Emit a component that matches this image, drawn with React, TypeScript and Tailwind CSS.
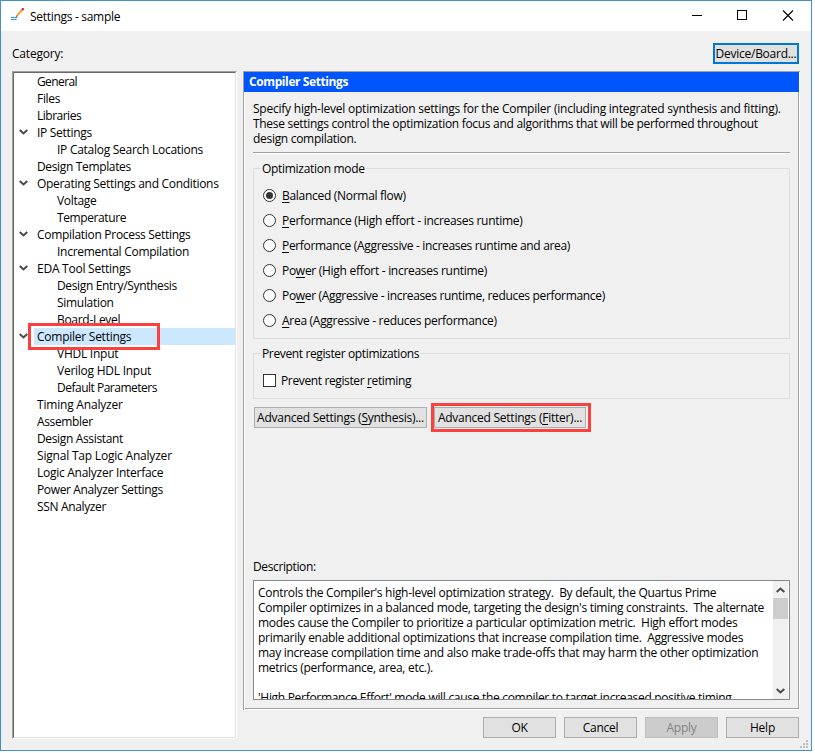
import { useState } from "react";
import type { ReactNode } from "react";
import clsx from "clsx";

interface TreeNode {
    label: string;
    child?: boolean;
    open?: boolean;
    tracking?: string;
}

const categories: TreeNode[] = [
    { label: "General", tracking: "tracking-[-0.6px]" },
    { label: "Files" },
    { label: "Libraries", tracking: "tracking-[-0.5px]" },
    { label: "IP Settings", open: true },
    { label: "IP Catalog Search Locations", child: true, tracking: "tracking-[-0.27px]" },
    { label: "Design Templates", tracking: "tracking-[-0.35px]" },
    { label: "Operating Settings and Conditions", open: true },
    { label: "Voltage", child: true },
    { label: "Temperature", child: true, tracking: "tracking-[-0.4px]" },
    { label: "Compilation Process Settings", open: true },
    { label: "Incremental Compilation", child: true, tracking: "tracking-[-0.27px]" },
    { label: "EDA Tool Settings", open: true, tracking: "tracking-[-0.24px]" },
    { label: "Design Entry/Synthesis", child: true, tracking: "tracking-[-0.35px]" },
    { label: "Simulation", child: true },
    { label: "Board-Level", child: true },
    { label: "Compiler Settings", open: true, tracking: "tracking-[-0.25px]" },
    { label: "VHDL Input", child: true, tracking: "tracking-[-0.25px]" },
    { label: "Verilog HDL Input", child: true, tracking: "tracking-[-0.25px]" },
    { label: "Default Parameters", child: true, tracking: "tracking-[-0.5px]" },
    { label: "Timing Analyzer", tracking: "tracking-[-0.2px]" },
    { label: "Assembler", tracking: "tracking-[-0.35px]" },
    { label: "Design Assistant", tracking: "tracking-[-0.35px]" },
    { label: "Signal Tap Logic Analyzer", tracking: "tracking-[-0.2px]" },
    { label: "Logic Analyzer Interface", tracking: "tracking-[-0.27px]" },
    { label: "Power Analyzer Settings", tracking: "tracking-[-0.36px]" },
    { label: "SSN Analyzer", tracking: "tracking-[-0.35px]" },
];

// "&" marks the accelerator letter
const modes = [
    "&Balanced (Normal flow)",
    "&Performance (High effort - increases runtime)",
    "&Performance (Aggressive - increases runtime and area)",
    "Po&wer (High effort - increases runtime)",
    "Po&wer (Aggressive - increases runtime, reduces performance)",
    "&Area (Aggressive - reduces performance)",
];

const description = [
    "Controls the Compiler's high-level optimization strategy.  By default, the Quartus Prime",
    "Compiler optimizes in a balanced mode, targeting the design's timing constraints.  The alternate",
    "modes cause the Compiler to prioritize a particular optimization metric.  High effort modes",
    "primarily enable additional optimizations that increase compilation time.  Aggressive modes",
    "may increase compilation time and also make trade-offs that may harm the other optimization",
    "metrics (performance, area, etc.).",
    "",
    "'High Performance Effort' mode will cause the compiler to target increased positive timing",
];

function Accel({ text }: { text: string }) {
    const i = text.indexOf("&");
    if (i < 0) return <span>{text}</span>;
    return (
        <span>
            {text.slice(0, i)}
            <span className="underline underline-offset-2">{text[i + 1]}</span>
            {text.slice(i + 2)}
        </span>
    );
}

function Chevron({ up }: { up?: boolean }) {
    return (
        <svg className={clsx("block", up && "rotate-180")} width="9" height="6" viewBox="0 0 9 6" fill="none">
            <path d="M0.7 0.9L4.5 4.4L8.3 0.9" stroke="#4c4c4c" strokeWidth="2.1" />
        </svg>
    );
}

function Highlight({ className }: { className: string }) {
    return <div className={clsx("absolute z-10 border-3 border-[#fc4040] pointer-events-none", className)}></div>;
}

function PushButton({ text, className, disabled }: { text: string; className?: string; disabled?: boolean }) {
    return (
        <button
            disabled={disabled}
            className={clsx(
                "h-[21px] flex items-center justify-center border whitespace-pre tracking-[-0.25px]",
                disabled ? "bg-[#cccccc] border-[#bfbfbf] text-[#838383]" : "bg-[#e1e1e1] border-[#adadad]",
                className
            )}
        >
            <Accel text={text} />
        </button>
    );
}

function Group({ title, className, children }: { title: string; className: string; children: ReactNode }) {
    return (
        <section className={clsx("relative border border-[#dcdcdc]", className)}>
            <h3 className="absolute -top-2 left-[7px] px-px bg-[#f0f0f0] leading-4 whitespace-pre">{title}</h3>
            {children}
        </section>
    );
}

function TitleBar() {
    return (
        <header className="h-[30px] shrink-0 bg-white flex items-center pl-[10px]">
            <svg width="14" height="14" viewBox="0 0 14 14" className="mb-0.5">
                <path d="M0 9.5H6M0 11.5H5.5" stroke="#2a9fe0" strokeWidth="1" />
                <path d="M6 7.6L11.2 1.8" stroke="#f0a030" strokeWidth="2" />
                <path d="M5 9L5.5 7.2L6.8 8.3Z" fill="#333333" />
                <path d="M11 2L12.6 0.3" stroke="#e02020" strokeWidth="2.2" />
            </svg>
            <h1 className="ml-[5px] mt-px flex-1">Settings - sample</h1>
            <svg width="120" height="30" viewBox="0 0 120 30" fill="none" stroke="#000" shapeRendering="crispEdges">
                <path d="M1 14.5H11" />
                <rect x="46.5" y="9.5" width="9" height="9" />
                <path d="M92 9.5L102 19.5M102 9.5L92 19.5" shapeRendering="auto" strokeWidth="1.1" />
            </svg>
        </header>
    );
}

function CategoryTree({ selected, onSelect }: { selected: string; onSelect: (label: string) => void }) {
    return (
        <nav className="w-[225px] h-[668px] border border-t-[#a0a0a0] border-l-[#a0a0a0] border-r-white border-b-white">
            <ul className="h-full bg-white border border-t-[#696969] border-l-[#696969] border-r-[#e3e3e3] border-b-[#e3e3e3]">
                {categories.map((node) => (
                    <li key={node.label} className="relative h-[17px] flex items-center">
                        <div className="w-5 shrink-0 pl-[5px] pb-px">{node.open && <Chevron />}</div>
                        <div
                            onClick={() => onSelect(node.label)}
                            className={clsx(
                                "flex-1 h-full leading-[17px] whitespace-pre",
                                node.child ? "pl-[23px]" : "pl-[3px]",
                                node.label === selected && "bg-[#cce8ff]",
                                node.tracking
                            )}
                        >
                            {node.label}
                        </div>
                        {node.label === "Compiler Settings" && <Highlight className="left-[14px] -top-[5px] w-[132px] h-[27px]" />}
                    </li>
                ))}
            </ul>
        </nav>
    );
}

function CompilerSettings() {
    const [mode, setMode] = useState(0);
    return (
        <main className="w-[557px] h-[639px] border-l border-t border-[#a0a0a0]">
            <div className="h-[638px] border-l border-b border-r border-white">
                <div className="h-full border-r border-b border-[#a0a0a0]">
                    <h2 className="-ml-px w-[555px] h-5 pl-[5px] bg-[#0055ff] text-white font-bold leading-5 tracking-[-0.4px]">
                        Compiler Settings
                    </h2>
                    <div className="pl-2 w-[545px]">
                        <div className="pt-[9px] pb-[6px] leading-[15px] whitespace-pre">
                            <p>
                                <span className="tracking-[-0.23px]">
                                    Specify high-level optimization settings for the Compiler (including integrated synthesis and fitting).
                                </span>
                                {"\nThese settings control the optimization focus and algorithms that will be performed throughout\ndesign compilation."}
                            </p>
                        </div>
                        <div className="h-0.5 bg-white border-t border-[#a0a0a0]"></div>
                        <Group title="Optimization mode" className="mt-[14px] h-[171px] pt-[14px] pl-[9px]">
                            {modes.map((text, i) => (
                                <div
                                    key={text}
                                    onClick={() => setMode(i)}
                                    className={clsx(
                                        "h-[25px] flex items-center gap-[6px] whitespace-pre",
                                        i === 2 || i === 4 ? "tracking-[-0.33px]" : "tracking-[-0.29px]"
                                    )}
                                >
                                    <div className="size-[13px] rounded-full border border-[#333333] bg-white flex items-center justify-center">
                                        {mode === i && <div className="size-[7px] rounded-full bg-[#333333]"></div>}
                                    </div>
                                    <Accel text={text} />
                                </div>
                            ))}
                        </Group>
                        <Group title="Prevent register optimizations" className="mt-[14px] h-[46px] pt-[20px] pl-[9px] tracking-[-0.37px]">
                            <div className="h-[13px] flex items-center gap-[5px]">
                                <div className="size-[13px] border border-[#333333] bg-white"></div>
                                <Accel text="Prevent register &retiming" />
                            </div>
                        </Group>
                        <div className="mt-2 pl-px flex gap-[7px]">
                            <PushButton text="Advanced Settings (&Synthesis)..." className="w-[173px]" />
                            <div className="relative">
                                <PushButton text="Advanced Settings (&Fitter)..." className="w-[152px]" />
                                <Highlight className="-left-[3px] -top-1 w-[160px] h-[29px]" />
                            </div>
                        </div>
                        <p className="mt-[131px] leading-4 tracking-[-0.38px]">Description:</p>
                        <div className="mt-[5px] w-[537px] h-[120px] border border-[#828790] bg-white flex justify-between pr-px overflow-hidden">
                            <p className="pl-1 pt-1 leading-[15px] whitespace-pre">{description.join("\n")}</p>
                            <div className="w-[15px] bg-[#f0f0f0] flex flex-col items-center pt-[6px] pb-[5px]">
                                <Chevron up />
                                <div className="mt-[5px] w-full h-[21px] shrink-0 bg-[#cdcdcd]"></div>
                                <div className="flex-1"></div>
                                <Chevron />
                            </div>
                        </div>
                    </div>
                </div>
            </div>
        </main>
    );
}

export default function App() {
    const [selected, setSelected] = useState("Compiler Settings");
    return (
        <div className="w-[815px] h-[753px] bg-white overflow-hidden">
            <div className="relative w-[812px] h-[751px] flex flex-col border border-[#4590c8] bg-[#f0f0f0] text-black text-xs font-['Open_Sans','Noto_Sans',sans-serif] tracking-[-0.3px] select-none">
                <TitleBar />
                <div className="h-10 pt-3 pl-[11px] pr-3 flex justify-between">
                    <span className="leading-[21px] tracking-[-0.2px]">Category:</span>
                    <button className="w-[86px] h-[21px] flex items-center justify-center border-2 border-[#0078d7] bg-[#e1e1e1] whitespace-pre tracking-[-0.26px]">
                        Device/Board...
                    </button>
                </div>
                <div className="flex pl-[11px] gap-[6px]">
                    <CategoryTree selected={selected} onSelect={setSelected} />
                    <div>
                        <CompilerSettings />
                        <div className="mt-[7px] pr-px flex justify-end gap-2">
                            <PushButton text="OK" className="w-[73px]" />
                            <PushButton text="Cancel" className="w-[73px]" />
                            <PushButton text="Apply" className="w-[73px]" disabled />
                            <PushButton text="Help" className="w-[73px]" />
                        </div>
                    </div>
                </div>
                <svg className="absolute right-[3px] bottom-[2px]" width="8" height="8" fill="#bfbfbf">
                    <path d="M6 0h2v2h-2zM3 3h2v2h-2zM6 3h2v2h-2zM0 6h2v2h-2zM3 6h2v2h-2zM6 6h2v2h-2z" />
                </svg>
            </div>
        </div>
    );
}
